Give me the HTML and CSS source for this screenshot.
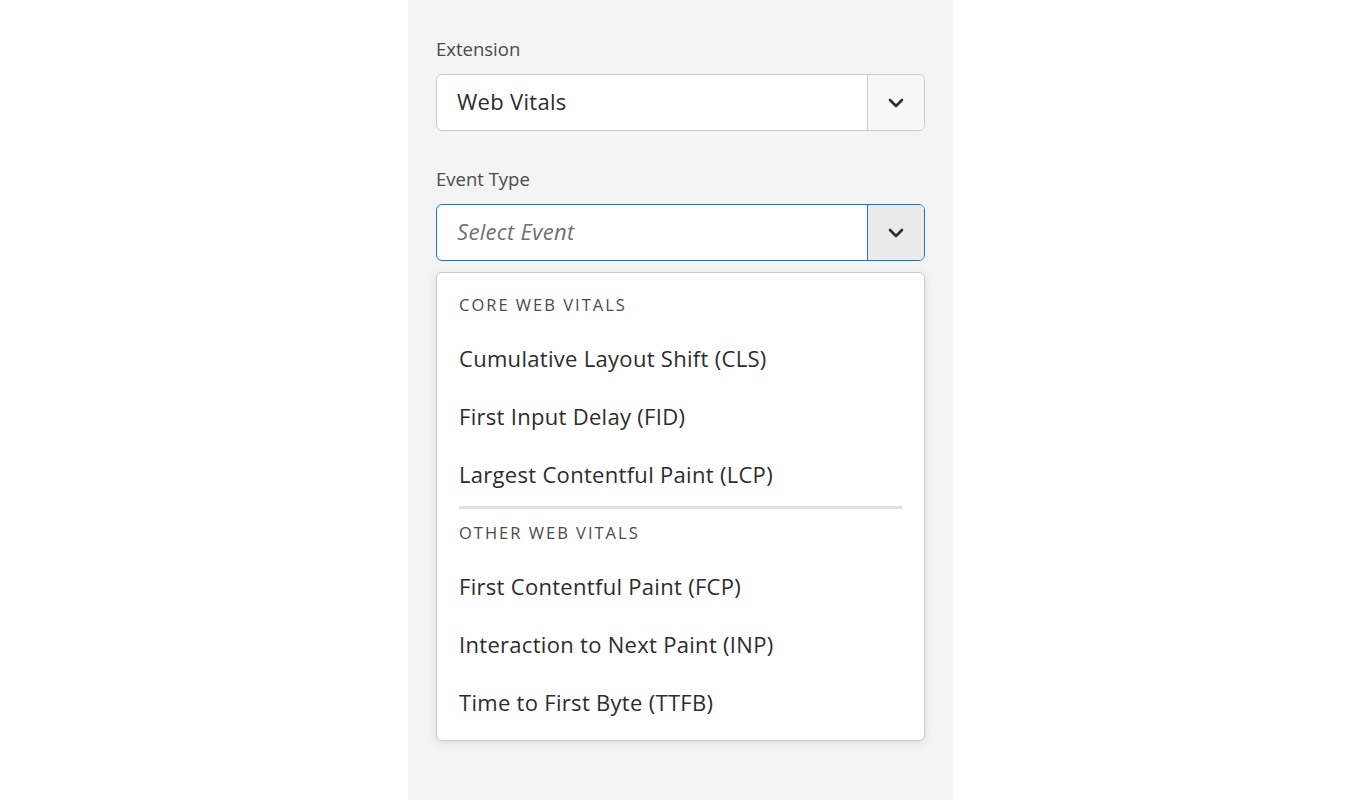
FILE: index.html
```html
<!DOCTYPE html>
<html lang="en">
<head>
<meta charset="utf-8">
<title>Web Vitals Event</title>
<link rel="stylesheet" href="styles.css">
</head>
<body>
<div class="page">
  <div class="panel">
    <div class="field">
      <label class="label">Extension</label>
      <div class="picker">
        <div class="picker-value">Web Vitals</div>
        <div class="picker-btn">
          <svg width="16" height="10" viewBox="0 0 16 10"><path d="M2 2 L8 8 L14 2" fill="none" stroke="#2c2c2c" stroke-width="2.6" stroke-linecap="round" stroke-linejoin="round"/></svg>
        </div>
      </div>
    </div>
    <div class="field">
      <label class="label">Event Type</label>
      <div class="picker focused">
        <div class="picker-value placeholder">Select Event</div>
        <div class="picker-btn">
          <svg width="16" height="10" viewBox="0 0 16 10"><path d="M2 2 L8 8 L14 2" fill="none" stroke="#2c2c2c" stroke-width="2.6" stroke-linecap="round" stroke-linejoin="round"/></svg>
        </div>
      </div>
    </div>
    <div class="popover">
      <div class="section-title">CORE WEB VITALS</div>
      <div class="item">Cumulative Layout Shift (CLS)</div>
      <div class="item">First Input Delay (FID)</div>
      <div class="item">Largest Contentful Paint (LCP)</div>
      <div class="divider"></div>
      <div class="section-title">OTHER WEB VITALS</div>
      <div class="item">First Contentful Paint (FCP)</div>
      <div class="item">Interaction to Next Paint (INP)</div>
      <div class="item">Time to First Byte (TTFB)</div>
    </div>
  </div>
</div>
</body>
</html>
```
FILE: styles.css
```css
* { box-sizing: border-box; }
html, body { margin: 0; padding: 0; background: #ffffff; }
body {
  font-family: "Open Sans", "Noto Sans", sans-serif;
  color: #2c2c2c;
}
.page {
  display: flex;
  justify-content: flex-start;
  height: 800px;
  padding-left: 408px;
}
.panel {
  width: 545px;
  height: 800px;
  background: #f4f4f4;
  padding: 36px 28px 0 28px;
}
.field + .field { margin-top: 35px; }
.label {
  display: block;
  font-size: 18.5px;
  color: #4b4b4b;
  line-height: 26px;
  margin-bottom: 12px;
}
.picker {
  display: flex;
  height: 57px;
  border: 1.5px solid #cacaca;
  border-radius: 6px;
  background: #fff;
  overflow: hidden;
}
.picker-value {
  flex: 1;
  display: flex;
  align-items: center;
  padding-left: 20px;
  padding-bottom: 3px;
  font-size: 22px;
  color: #2c2c2c;
  letter-spacing: 0.3px;
}
.placeholder {
  font-style: italic;
  color: #707070;
}
.picker-btn {
  width: 57px;
  display: flex;
  align-items: center;
  justify-content: center;
  border-left: 1.5px solid #cacaca;
  background: #f8f8f8;
}
.picker.focused { border-color: #1473e6; }
.picker.focused .picker-btn {
  border-left-color: #1473e6;
  background: #eaeaea;
}
.popover {
  margin-top: 11px;
  background: #fff;
  border: 1.5px solid #cacaca;
  border-radius: 6px;
  box-shadow: 0 2px 10px rgba(0,0,0,0.10);
  padding: 15px 22px 9px 22px;
}
.section-title {
  font-size: 16.5px;
  letter-spacing: 2px;
  color: #4b4b4b;
  height: 34px;
  line-height: 34px;
  margin-bottom: 7px;
}
.item {
  height: 58px;
  line-height: 58px;
  font-size: 22px;
  color: #2c2c2c;
  letter-spacing: 0.3px;
}
.divider {
  height: 3px;
  background: #e1e1e1;
  margin: 3px 0 7px 0;
}
```
